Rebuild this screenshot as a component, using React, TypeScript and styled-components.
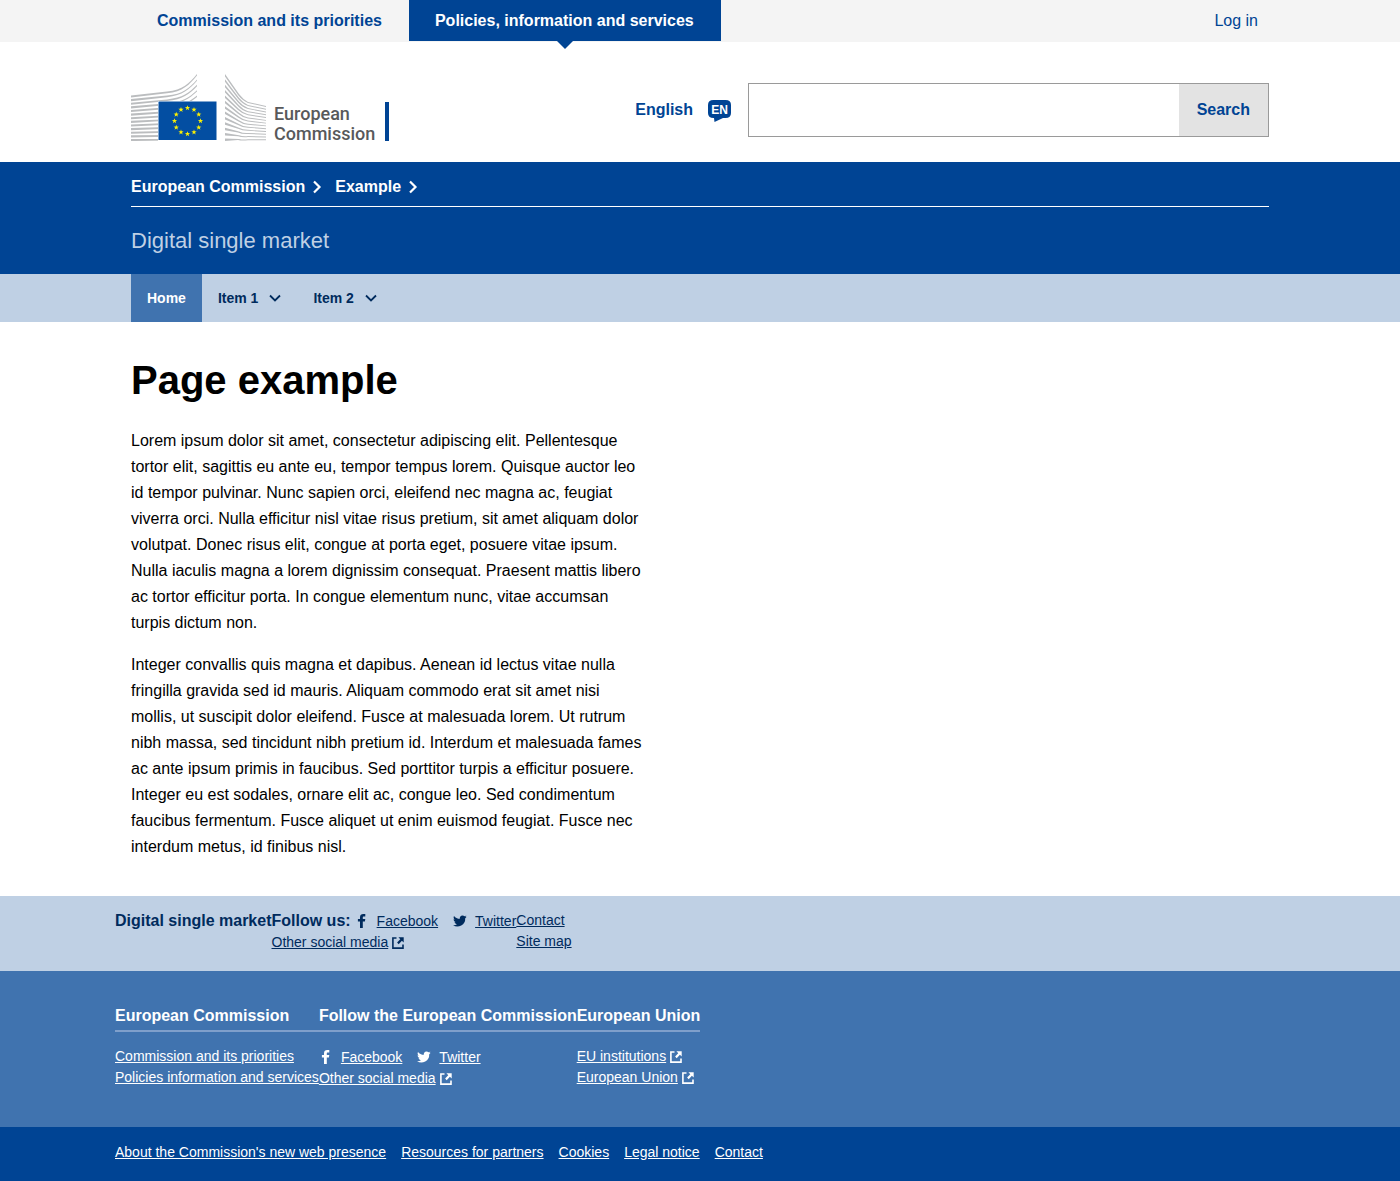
import React from "react";
import styled, { createGlobalStyle, css } from "styled-components";

const blue = "#004494";
const midBlue = "#4073af";
const paleBlue = "#bfd0e4";
const navy = "#002b5d";

const GlobalStyle = createGlobalStyle`
  *, *::before, *::after { box-sizing: border-box; }
  body {
    margin: 0;
    background: #fff;
    color: #000;
    font: 16px/24px "Liberation Sans", Arial, sans-serif;
  }
  h1, h2, p, ul { margin: 0; padding: 0; }
  ul { list-style: none; }
  a { color: inherit; }
  button, input { font: inherit; }
`;

const Container = styled.div`
  width: 100%;
  max-width: 1170px;
  margin: 0 auto;
  padding: 0 16px;
`;

const TopBar = styled.nav`
  height: 42px;
  background: #f4f4f4;
  color: ${blue};
`;
const TopBarRow = styled(Container)`
  display: flex;
  align-items: flex-start;
  justify-content: space-between;
`;
const Tabs = styled.div`
  display: flex;
`;
const TopLink = styled.a<{ $active?: boolean }>`
  position: relative;
  padding: 9px 27px 8px 26px;
  font-weight: bold;
  text-decoration: none;
  ${({ $active }) =>
    $active &&
    css`
      background: ${blue};
      color: #fff;
      &::after {
        content: "";
        position: absolute;
        top: 100%;
        left: 50%;
        margin-left: -8px;
        border: 8px solid transparent;
        border-top-color: ${blue};
        border-bottom-width: 0;
      }
    `}
`;
const LoginLink = styled.a`
  padding: 9px 11px 8px;
  text-decoration: none;
`;

const Header = styled.header`
  padding: 32px 0 21px;
`;
const HeaderRow = styled(Container)`
  display: flex;
  align-items: flex-start;
  justify-content: space-between;
`;
const LogoLink = styled.a`
  display: flex;
  align-items: flex-end;
  color: #58595b;
  text-decoration: none;
`;
const LogoName = styled.span`
  display: flex;
  flex-direction: column;
  height: 39px;
  margin-left: 6px;
  padding: 2px 10px 0 0;
  border-right: 4px solid ${blue};
  font: 500 18px/20px Roboto, "Noto Sans", sans-serif;
`;
const Tools = styled.div`
  display: flex;
  align-items: center;
  padding-top: 9px;
`;
const Language = styled.a`
  display: flex;
  align-items: center;
  gap: 14px;
  margin-right: 16px;
  color: ${blue};
  font-weight: bold;
  text-decoration: none;
`;
const SearchForm = styled.form`
  display: flex;
  width: 521px;
  height: 54px;
  border: 1px solid #9a9a9a;
`;
const SearchInput = styled.input`
  flex: 1;
  min-width: 0;
  padding: 0 16px;
  border: 0;
  background: #fff;
`;
const SearchButton = styled.button`
  padding: 0 18px;
  border: 0;
  background: #e3e3e3;
  color: ${blue};
  font-weight: bold;
`;

const Banner = styled.section`
  background: ${blue};
  color: #fff;
`;
const Crumbs = styled.ul`
  display: flex;
  gap: 13px;
  padding: 13px 0 7px;
  border-bottom: 1px solid #fff;
  font-weight: bold;
`;
const Crumb = styled.li`
  display: flex;
  align-items: center;
  gap: 7px;
  a { text-decoration: none; }
`;
const SiteName = styled.p`
  padding: 18px 0 17px;
  color: ${paleBlue};
  font-size: 22px;
  line-height: 32px;
`;

const NavBar = styled.nav`
  background: ${paleBlue};
`;
const NavRow = styled(Container)`
  display: flex;
  font-size: 14px;
  font-weight: bold;
`;
const navItem = css`
  display: flex;
  align-items: center;
  height: 48px;
  padding: 0 16px;
`;
const HomeLink = styled.a`
  ${navItem}
  background: ${midBlue};
  color: #fff;
  text-decoration: none;
`;
const MenuButton = styled.button`
  ${navItem}
  gap: 11px;
  border: 0;
  background: none;
  color: ${navy};
`;

const Main = styled(Container).attrs({ as: "main" })`
  padding-top: 34px;
  padding-bottom: 36px;
`;
const Title = styled.h1`
  margin-bottom: 24px;
  font-size: 40px;
  line-height: 48px;
`;
const Paragraph = styled.p`
  max-width: 512px;
  line-height: 26px;
  & + & { margin-top: 16px; }
`;

const FooterBand = styled.div<{ $tone: "pale" | "mid" | "dark" }>`
  ${({ $tone }) =>
    ({
      pale: css`background: ${paleBlue}; color: ${navy}; padding: 14px 0 18px;`,
      mid: css`background: ${midBlue}; color: #fff; padding: 34px 0 38px;`,
      dark: css`background: ${blue}; color: #fff; padding: 15px 0 18px;`,
    })[$tone]}
`;
const FooterRow = styled.div<{ $gap?: number }>`
  display: flex;
  flex-wrap: wrap;
  gap: ${({ $gap }) => $gap ?? 0}px;
  width: 100%;
  max-width: 1170px;
  margin: 0 auto;
  font-size: 14px;
  line-height: 21px;
`;
const FooterTitle = styled.h2<{ $ruled?: boolean }>`
  font-size: 16px;
  line-height: 22px;
  ${({ $ruled }) =>
    $ruled &&
    css`
      margin-bottom: 14px;
      padding-bottom: 3px;
      border-bottom: 2px solid #7f9fcb;
    `}
`;
const Social = styled.div`
  display: flex;
  align-items: center;
  height: 22px;
`;
const FollowLabel = styled.h2`
  margin-right: 4px;
  font-size: 16px;
  line-height: 22px;
`;
const SocialItem = styled.span`
  display: flex;
  align-items: center;
  gap: 8px;
  & + & { margin-left: 15px; }
`;
const LinkIcon = styled.svg`
  margin-left: 4px;
  vertical-align: -2px;
`;

const External = () => (
  <LinkIcon width="12" height="12" viewBox="0 0 12 12" fill="none" stroke="currentColor" aria-hidden="true">
    <path d="M4.500 1H.900v10.100H11V7.500" strokeWidth="1.6" />
    <path d="M6.400 .3h5.300v5.200L9.900 3.700 6.700 7.200 5.100 5.600 8.300 2.200z" fill="currentColor" stroke="none" />
  </LinkIcon>
);
const Chevron = ({ down }: { down?: boolean }) => (
  <svg width={down ? 12 : 10} height={down ? 8 : 14} viewBox={down ? "0 0 12 8" : "0 0 10 14"} fill="none" stroke="currentColor" strokeWidth={down ? 1.8 : 2.2} aria-hidden="true">
    <path d={down ? "M1 1.500l5 5 5-5" : "M2 1.500L7.500 7 2 12.500"} />
  </svg>
);
const FacebookIcon = () => (
  <svg width="14" height="16" viewBox="1 0 14 16" fill="currentColor" aria-hidden="true">
    <path d="M6 15V8.600H3.900V6H6V4.200C6 2 7.300.9 9.300.9c.9 0 1.700.1 2 .1v2.500H9.900c-1 0-1.100.5-1.100 1.300V6h2.500l-.4 2.600H8.800V15z" />
  </svg>
);
const TwitterIcon = () => (
  <svg width="14" height="14" viewBox="1 1 22 22" fill="currentColor" aria-hidden="true">
    <path d="M22.500 5.200c-.8.4-1.600.6-2.500.7.9-.5 1.600-1.400 1.900-2.400-.8.5-1.800.9-2.800 1.100A4.400 4.400 0 0 0 11.700 8.600C8 8.400 4.800 6.700 2.600 4c-1.200 2-.6 4.600 1.300 5.900-.7 0-1.400-.2-2-.5 0 2.100 1.500 3.900 3.500 4.300-.6.2-1.300.2-2 .1.600 1.700 2.200 3 4.100 3A8.800 8.800 0 0 1 1 18.600a12.400 12.400 0 0 0 19.200-11c.9-.6 1.600-1.400 2.300-2.400z" />
  </svg>
);
const LanguageBadge = () => (
  <svg width="25" height="24" viewBox="0 0 25 24" aria-hidden="true">
    <path d="M6.500 2h12q5.500 0 5.500 5v8q0 5-5.500 5h-2.500L7.500 24l-.5-4h-.5Q1 20 1 15V7q0-5 5.500-5z" fill={blue} />
    <text x="12.500" y="16" fill="#fff" fontSize="12" fontWeight="bold" textAnchor="middle">EN</text>
  </svg>
);

const stripes = Array.from({ length: 13 }, (_, i) => i);
const starPoints = Array.from({ length: 10 }, (_, i) => {
  const r = i % 2 ? 1.1 : 2.8;
  const a = (i * Math.PI) / 5;
  return `${(r * Math.sin(a)).toFixed(2)},${(-r * Math.cos(a)).toFixed(2)}`;
}).join(" ");

// Each stripe is a filled band that narrows away from its thick end.
const leftStripe = (i: number) => {
  const start = 21.5 + i * 3.62;
  const bend = 17.5 + i * 3.95;
  const end = 0 + i * 5.4;
  return `M0 ${start}L36 ${bend}C52 ${bend - 1.5} 58 ${end + (bend - end) * 0.55} 66 ${end}V${end + 1.4}C58 ${end + (bend - end) * 0.55 + 1.4} 52 ${bend} 36 ${bend + 1.7}L0 ${start + 2.1}z`;
};
const rightStripe = (i: number) => {
  const start = 0 + i * 5.37;
  const bend = 24.5 + i * 3.38;
  const end = 32 + i * 2.78;
  const lift = (bend - start) * 0.18;
  return `M94 ${start}L108 ${bend - lift}Q112 ${bend + 1} 117 ${bend + (end - bend) * 0.45}L135 ${end}V${end + 0.9}L117 ${bend + (end - bend) * 0.45 + 1}Q111 ${bend + 2} 107 ${bend - lift + 1}L94 ${start + 2.5}z`;
};

const Emblem = () => (
  <svg width="137" height="67" viewBox="0 0 137 67" aria-hidden="true">
    <g fill="#bbbdbf">
      {stripes.map((i) => <path key={i} d={leftStripe(i)} />)}
      {stripes.map((i) => <path key={i} d={rightStripe(i)} />)}
    </g>
    <path d="M27 27h59v40H27z" fill="#fff" />
    <path d="M27.500 27.500h58v38.500h-58z" fill="#034ea2" />
    {Array.from({ length: 12 }, (_, i) => (
      <polygon key={i} points={starPoints} fill="#fff200" transform={`translate(${56.5 + 13 * Math.sin((i * Math.PI) / 6)} ${47 - 13 * Math.cos((i * Math.PI) / 6)})`} />
    ))}
  </svg>
);

const SocialLinks = ({ label }: { label?: string }) => (
  <>
    <Social>
      {label && <FollowLabel>{label}</FollowLabel>}
      <SocialItem><FacebookIcon /><a href="#facebook">Facebook</a></SocialItem>
      <SocialItem><TwitterIcon /><a href="#twitter">Twitter</a></SocialItem>
    </Social>
    <a href="#social">Other social media</a><External />
  </>
);

export default function App() {
  return (
    <>
      <GlobalStyle />
      <TopBar aria-label="Sites">
        <TopBarRow>
          <Tabs>
            <TopLink href="#priorities">Commission and its priorities</TopLink>
            <TopLink href="#policies" $active>Policies, information and services</TopLink>
          </Tabs>
          <LoginLink href="#login">Log in</LoginLink>
        </TopBarRow>
      </TopBar>
      <Header>
        <HeaderRow>
          <LogoLink href="#home">
            <Emblem />
            <LogoName>
              <span>European</span>
              <span>Commission</span>
            </LogoName>
          </LogoLink>
          <Tools>
            <Language href="#language">English<LanguageBadge /></Language>
            <SearchForm role="search">
              <SearchInput type="search" aria-label="Search this website" />
              <SearchButton type="submit">Search</SearchButton>
            </SearchForm>
          </Tools>
        </HeaderRow>
      </Header>
      <Banner>
        <Container>
          <Crumbs>
            <Crumb><a href="#ec">European Commission</a><Chevron /></Crumb>
            <Crumb><a href="#example">Example</a><Chevron /></Crumb>
          </Crumbs>
          <SiteName>Digital single market</SiteName>
        </Container>
      </Banner>
      <NavBar aria-label="Main">
        <NavRow>
          <HomeLink href="#home">Home</HomeLink>
          <MenuButton type="button">Item 1<Chevron down /></MenuButton>
          <MenuButton type="button">Item 2<Chevron down /></MenuButton>
        </NavRow>
      </NavBar>
      <Main>
        <Title>Page example</Title>
        <Paragraph>
          Lorem ipsum dolor sit amet, consectetur adipiscing elit. Pellentesque tortor elit, sagittis eu ante eu, tempor tempus lorem. Quisque auctor leo id tempor pulvinar. Nunc sapien orci, eleifend nec magna ac, feugiat viverra orci. Nulla efficitur nisl vitae risus pretium, sit amet aliquam dolor volutpat. Donec risus elit, congue at porta eget, posuere vitae ipsum. Nulla iaculis magna a lorem dignissim consequat. Praesent mattis libero ac tortor efficitur porta. In congue elementum nunc, vitae accumsan turpis dictum non.
        </Paragraph>
        <Paragraph>
          Integer convallis quis magna et dapibus. Aenean id lectus vitae nulla fringilla gravida sed id mauris. Aliquam commodo erat sit amet nisi mollis, ut suscipit dolor eleifend. Fusce at malesuada lorem. Ut rutrum nibh massa, sed tincidunt nibh pretium id. Interdum et malesuada fames ac ante ipsum primis in faucibus. Sed porttitor turpis a efficitur posuere. Integer eu est sodales, ornare elit ac, congue leo. Sed condimentum faucibus fermentum. Fusce aliquet ut enim euismod feugiat. Fusce nec interdum metus, id finibus nisl.
        </Paragraph>
      </Main>
      <footer>
        <FooterBand $tone="pale">
          <FooterRow>
            <FooterTitle>Digital single market</FooterTitle>
            <div><SocialLinks label="Follow us:" /></div>
            <ul>
              <li><a href="#contact">Contact</a></li>
              <li><a href="#sitemap">Site map</a></li>
            </ul>
          </FooterRow>
        </FooterBand>
        <FooterBand $tone="mid">
          <FooterRow>
            <div>
              <FooterTitle $ruled>European Commission</FooterTitle>
              <ul>
                <li><a href="#priorities">Commission and its priorities</a></li>
                <li><a href="#policies">Policies information and services</a></li>
              </ul>
            </div>
            <div>
              <FooterTitle $ruled>Follow the European Commission</FooterTitle>
              <SocialLinks />
            </div>
            <div>
              <FooterTitle $ruled>European Union</FooterTitle>
              <ul>
                <li><a href="#institutions">EU institutions</a><External /></li>
                <li><a href="#eu">European Union</a><External /></li>
              </ul>
            </div>
          </FooterRow>
        </FooterBand>
        <FooterBand $tone="dark">
          <FooterRow $gap={15}>
            <a href="#about">About the Commission's new web presence</a>
            <a href="#partners">Resources for partners</a>
            <a href="#cookies">Cookies</a>
            <a href="#legal">Legal notice</a>
            <a href="#contact">Contact</a>
          </FooterRow>
        </FooterBand>
      </footer>
    </>
  );
}
